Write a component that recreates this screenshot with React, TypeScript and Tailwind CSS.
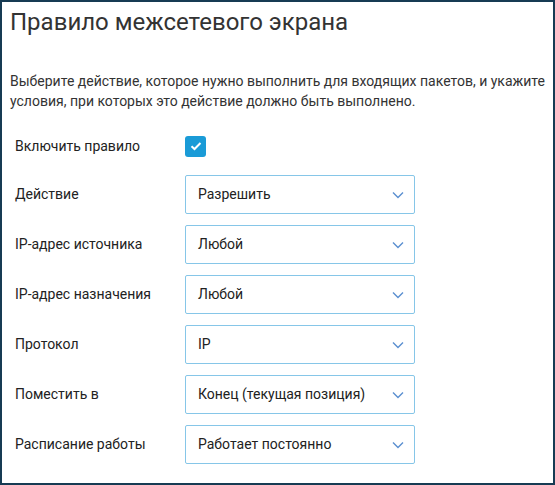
import React, { useState } from 'react';

const rows: { label: string; value: string }[] = [
  { label: 'Действие', value: 'Разрешить' },
  { label: 'IP-адрес источника', value: 'Любой' },
  { label: 'IP-адрес назначения', value: 'Любой' },
  { label: 'Протокол', value: 'IP' },
  { label: 'Поместить в', value: 'Конец (текущая позиция)' },
  { label: 'Расписание работы', value: 'Работает постоянно' },
];

const Chevron = () => (
  <svg width="12" height="8" viewBox="0 0 12 8" fill="none">
    <path d="M1 1.5 6 6.5 11 1.5" stroke="#5b8fd0" strokeWidth="1.4" />
  </svg>
);

const App: React.FC = () => {
  const [enabled, setEnabled] = useState(true);

  return (
    <div
      className="w-[555px] h-[485px] border-2 border-[#173b53] bg-white text-[#222] overflow-hidden"
      style={{ fontFamily: 'Roboto, "Liberation Sans", sans-serif' }}
    >
      <h1 className="pl-2 pt-[5px] text-[24px] leading-[30px] text-[#333]">Правило межсетевого экрана</h1>
      <p className="pl-2 pr-1 mt-[34px] text-[14px] leading-[20px] text-[#333]">
        Выберите действие, которое нужно выполнить для входящих пакетов, и укажите условия, при которых это действие
        должно быть выполнено.
      </p>

      <div className="pl-[13px] mt-[20px] flex flex-col">
        <div className="flex items-center h-[30px]">
          <span className="w-[170px] text-[14px]">Включить правило</span>
          <button
            onClick={() => setEnabled(!enabled)}
            className="w-[21px] h-[21px] rounded-[3px] bg-[#1a9bd7] flex items-center justify-center"
          >
            {enabled && (
              <svg width="12" height="10" viewBox="0 0 12 10" fill="none">
                <path d="M1.5 5.2 4.5 8 10.5 2" stroke="white" strokeWidth="2" />
              </svg>
            )}
          </button>
        </div>

        {rows.map((r, i) => (
          <div key={r.label} className={`flex items-center ${i === 0 ? 'mt-[14px]' : 'mt-[11px]'}`}>
            <span className="w-[170px] text-[14px]">{r.label}</span>
            <div className="w-[230px] h-[39px] border border-[#86c6e8] rounded-[2px] flex items-center justify-between pl-3 pr-[10px]">
              <span className="text-[14px]">{r.value}</span>
              <Chevron />
            </div>
          </div>
        ))}
      </div>
    </div>
  );
};

export default App;
